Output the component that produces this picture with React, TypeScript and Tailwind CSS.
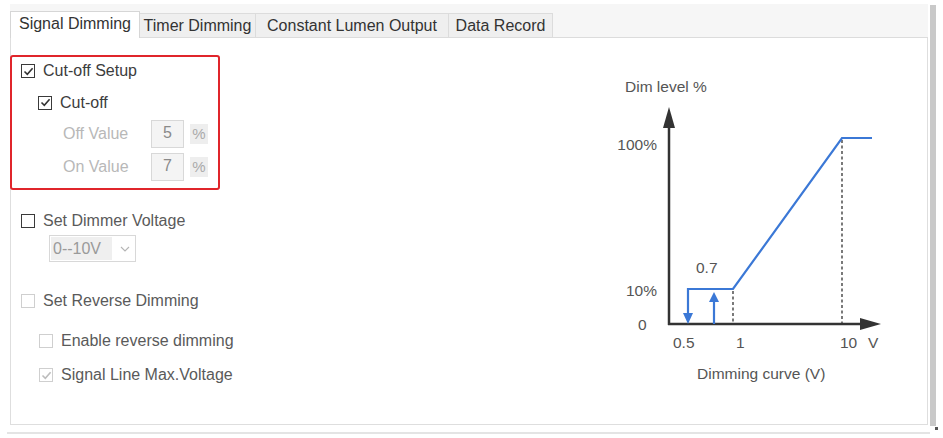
import React from "react";

function Cb({ checked = false, light = false }: { checked?: boolean; light?: boolean }) {
  const border = light ? "border-[#cfcfcf]" : "border-[#3a3a3a]";
  const stroke = light ? "#bdbdbd" : "#333333";
  return (
    <span className={`w-[14px] h-[14px] border-[1.5px] ${border} bg-white flex items-center justify-center shrink-0`}>
      {checked && (
        <svg width="11" height="11" viewBox="0 0 11 11">
          <path d="M1.5 5.5 L4.3 8.3 L9.6 2.2" fill="none" stroke={stroke} strokeWidth="1.6" />
        </svg>
      )}
    </span>
  );
}

function Chart() {
  const gray = "#555555";
  const blue = "#3b78d6";
  return (
    <svg width="300" height="320" viewBox="600 70 300 320" className="shrink-0">
      <g fontFamily="'Liberation Sans', Arial, sans-serif" fontSize="15.5" fill={gray}>
        <text x="625" y="92">Dim level %</text>
        <text x="657" y="150" textAnchor="end">100%</text>
        <text x="657" y="296" textAnchor="end">10%</text>
        <text x="638" y="330">0</text>
        <text x="673" y="348">0.5</text>
        <text x="736" y="348">1</text>
        <text x="840" y="348">10</text>
        <text x="868" y="348">V</text>
        <text x="696" y="273">0.7</text>
        <text x="697" y="379">Dimming curve (V)</text>
      </g>
      {/* axes */}
      <line x1="669" y1="325" x2="669" y2="124" stroke="#333" strokeWidth="2.5" />
      <polygon points="663,128 675,128 669,107" fill="#333" />
      <line x1="668" y1="324" x2="864" y2="324" stroke="#333" strokeWidth="2.5" />
      <polygon points="860,318 860,330 881,324" fill="#333" />
      {/* dashed guides */}
      <line x1="733" y1="291" x2="733" y2="323" stroke="#333" strokeWidth="1.3" strokeDasharray="3 2.5" />
      <line x1="842" y1="140" x2="842" y2="323" stroke="#333" strokeWidth="1.3" strokeDasharray="3 2.5" />
      {/* curve */}
      <polyline points="688,315 688,289 733,289 842,138 872,138" fill="none" stroke={blue} strokeWidth="2.2" />
      <polygon points="683,313 693,313 688,324" fill={blue} />
      <line x1="714" y1="324" x2="714" y2="300" stroke={blue} strokeWidth="2.2" />
      <polygon points="709,302 719,302 714,292" fill={blue} />
    </svg>
  );
}

export default function App() {
  const tabBase = "flex items-center justify-center text-[16px] text-[#333] leading-none";
  return (
    <div className="w-[943px] h-[438px] bg-white overflow-hidden font-['Liberation_Sans',Arial,sans-serif]">
      <div className="flex items-start">
        <div className="ml-[10px] mt-[4px] w-[918px] flex flex-col">
          {/* tab strip */}
          <div className="h-[34px] bg-[#f6f6f6] border-b border-[#dcdcdc] flex items-end">
            <div className={`${tabBase} w-[130px] h-[27px] -mb-px bg-white border-t border-l border-r border-[#d6d6d6] pb-[2px]`}>
              Signal Dimming
            </div>
            <div className={`${tabBase} w-[116px] h-[24px] bg-[#efefef] border-t border-r border-[#dcdcdc]`}>
              Timer Dimming
            </div>
            <div className={`${tabBase} w-[193px] h-[24px] bg-[#efefef] border-t border-r border-[#dcdcdc]`}>
              Constant Lumen Output
            </div>
            <div className={`${tabBase} w-[104px] h-[24px] bg-[#efefef] border-t border-r border-[#dcdcdc]`}>
              Data Record
            </div>
          </div>
          {/* panel */}
          <div className="h-[387px] border-l border-r border-b border-[#dedede] flex">
            <div className="w-[589px] flex flex-col">
              {/* red box */}
              <div className="mt-[17px] -ml-px w-[210px] h-[135px] border-2 border-[#e0252b] rounded-[3px] flex flex-col">
                <div className="h-[28px] pl-[9px] flex items-center gap-[8px]">
                  <Cb checked />
                  <span className="text-[16px] text-[#3c3c3c]">Cut-off Setup</span>
                </div>
                <div className="h-[35px] pl-[26px] flex items-center gap-[8px]">
                  <Cb checked />
                  <span className="text-[16px] text-[#3c3c3c]">Cut-off</span>
                </div>
                <div className="h-[28px] pl-[51px] flex items-center">
                  <span className="w-[88px] text-[16px] text-[#b8b8b8]">Off Value</span>
                  <span className="w-[33px] h-[28px] border border-[#d8d8d8] bg-[#f4f4f4] flex items-center justify-center text-[16px] text-[#8a8a8a] pb-[3px]">5</span>
                  <span className="ml-[6px] w-[18px] h-[20px] bg-[#eeeeee] flex items-center justify-center text-[15px] text-[#aaaaaa]">%</span>
                </div>
                <div className="h-[28px] mt-[5px] pl-[51px] flex items-center">
                  <span className="w-[88px] text-[16px] text-[#b8b8b8]">On Value</span>
                  <span className="w-[33px] h-[28px] border border-[#d8d8d8] bg-[#f4f4f4] flex items-center justify-center text-[16px] text-[#8a8a8a] pb-[3px]">7</span>
                  <span className="ml-[6px] w-[18px] h-[20px] bg-[#eeeeee] flex items-center justify-center text-[15px] text-[#aaaaaa]">%</span>
                </div>
              </div>
              {/* dimmer voltage */}
              <div className="mt-[17px] h-[28px] pl-[10px] flex items-center gap-[8px]">
                <Cb />
                <span className="text-[16px] text-[#5a5a5a]">Set Dimmer Voltage</span>
              </div>
              <div className="ml-[38px] w-[87px] h-[27px] border border-[#d8d8d8] flex items-center">
                <span className="ml-[1px] w-[61px] h-[23px] bg-[#efefef] flex items-center pl-[2px] text-[16px] text-[#9a9a9a]">0--10V</span>
                <svg width="10" height="6" viewBox="0 0 10 6" className="ml-[8px]">
                  <path d="M1 1 L5 5 L9 1" fill="none" stroke="#b5b5b5" strokeWidth="1.1" />
                </svg>
              </div>
              {/* reverse dimming */}
              <div className="mt-[25px] h-[28px] pl-[10px] flex items-center gap-[8px]">
                <Cb light />
                <span className="text-[16px] text-[#5a5a5a]">Set Reverse Dimming</span>
              </div>
              <div className="mt-[12px] h-[28px] pl-[28px] flex items-center gap-[8px]">
                <Cb light />
                <span className="text-[16px] text-[#5a5a5a]">Enable reverse dimming</span>
              </div>
              <div className="mt-[6px] h-[28px] pl-[28px] flex items-center gap-[8px]">
                <Cb light checked />
                <span className="text-[16px] text-[#5a5a5a]">Signal Line Max.Voltage</span>
              </div>
            </div>
            <div className="mt-[32px]">
              <Chart />
            </div>
          </div>
        </div>
        <div className="ml-[2px] mt-[5px] flex flex-col items-end">
          <div className="w-[6px] h-[421px] bg-[#c9c9c9]" />
          <div className="mt-[1px] mr-[-2px] w-[3px] h-[3px] bg-[#555]" />
        </div>
      </div>
      <div className="ml-[7px] mt-[2px] w-[923px] h-[2px] bg-[#e4e4e4]" />
    </div>
  );
}
